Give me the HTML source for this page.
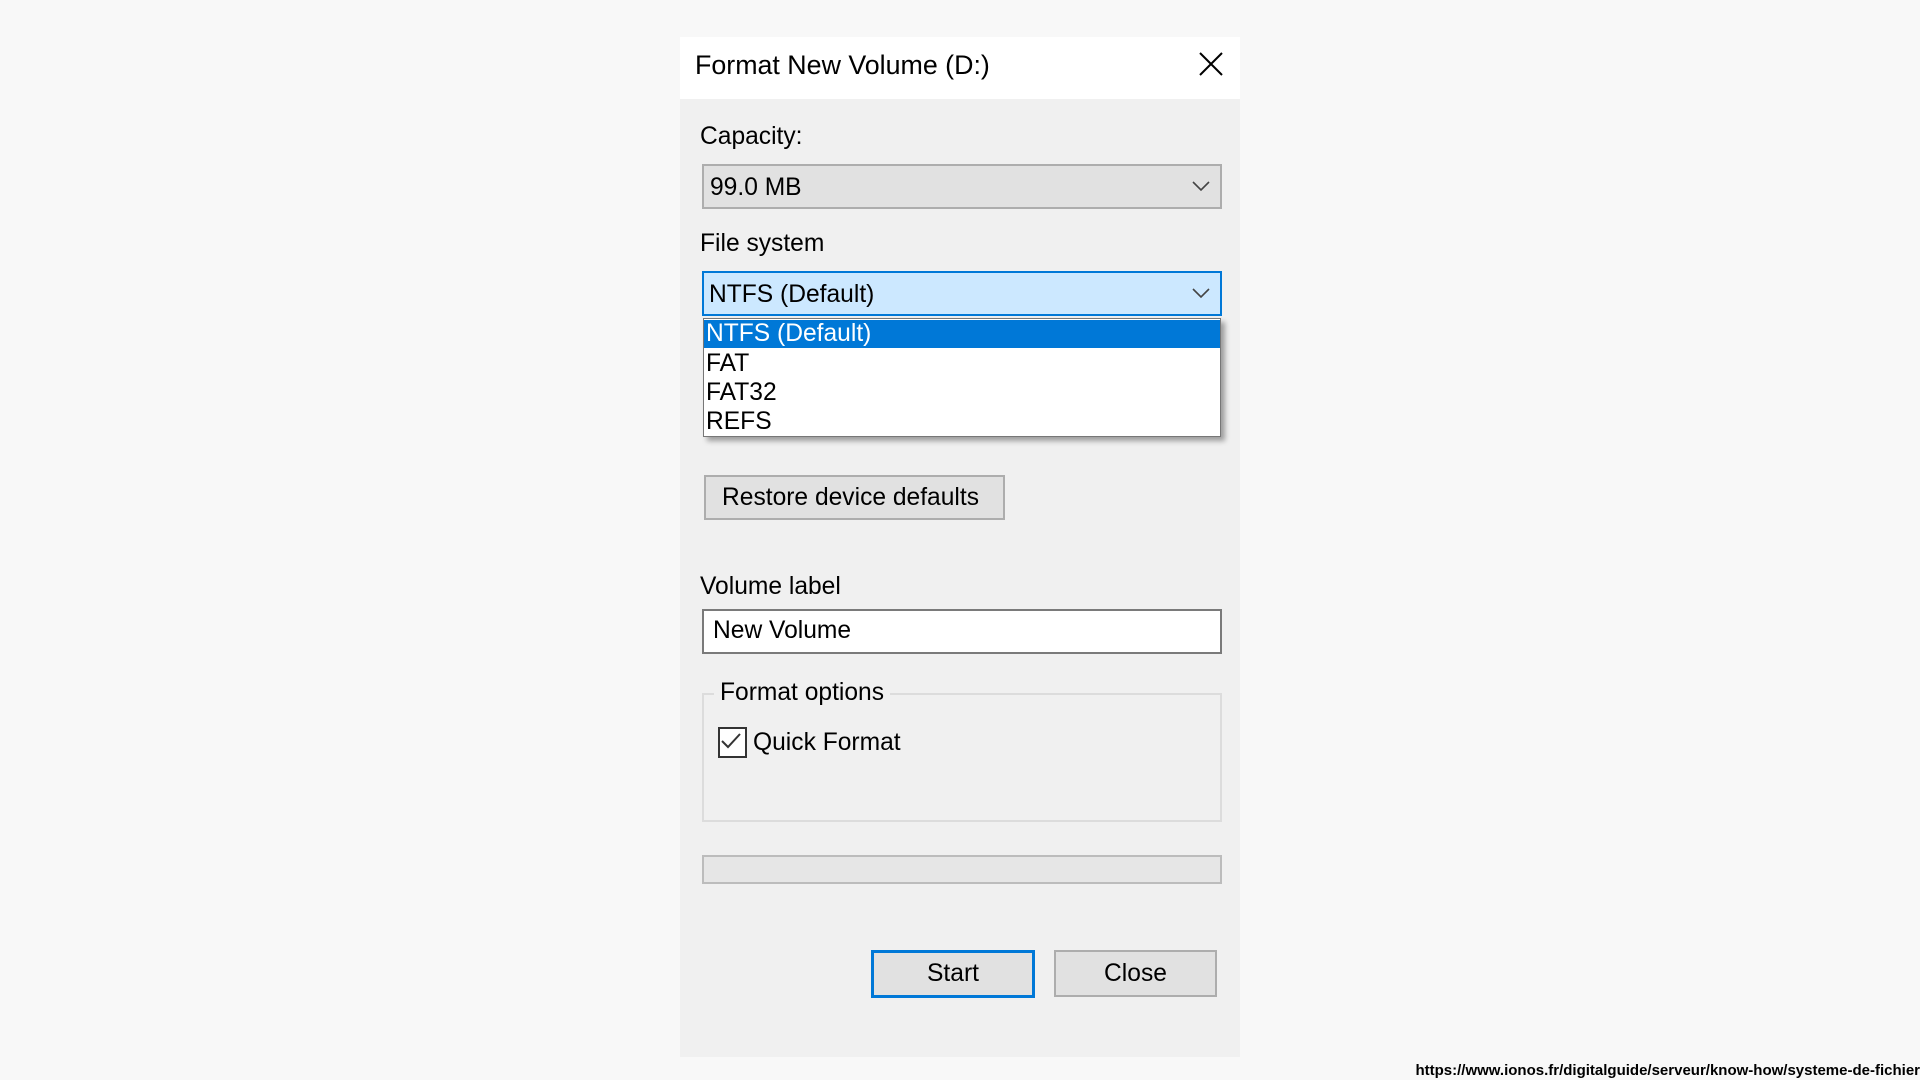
<!DOCTYPE html>
<html><head><meta charset="utf-8"><style>
body{margin:0;width:1920px;height:1080px;background:#f8f8f8;position:relative;overflow:hidden;font-family:"Liberation Sans",sans-serif;color:#000}
.a{position:absolute}
.t{font-size:24.6px;white-space:nowrap}
</style></head><body>
<div class="a" style="left:680px;top:37px;width:560px;height:1020px;background:#f0f0f0"></div>
<div class="a" style="left:680px;top:37px;width:560px;height:62px;background:#fff"></div>
<div class="a t" style="left:695px;top:50px;font-size:26.8px">Format New Volume (D:)</div>
<svg class="a" style="left:1199px;top:52px" width="24" height="24" viewBox="0 0 24 24"><path d="M1 1L23 23M23 1L1 23" stroke="#000" stroke-width="2"/></svg>

<div class="a t" style="left:700px;top:123px">Capacity:</div>
<div class="a" style="left:702px;top:164px;width:516px;height:41px;background:#e1e1e1;border:2px solid #adadad"></div>
<div class="a t" style="left:710px;top:174px">99.0 MB</div>
<svg class="a" style="left:1192px;top:180px" width="18" height="12" viewBox="0 0 18 12"><path d="M1 2L9 10L17 2" stroke="#444" stroke-width="1.6" fill="none"/></svg>

<div class="a t" style="left:700px;top:230px">File system</div>
<div class="a" style="left:702px;top:271px;width:516px;height:41px;background:#cce8ff;border:2px solid #0078d7"></div>
<div class="a t" style="left:709px;top:281px">NTFS (Default)</div>
<svg class="a" style="left:1192px;top:287px" width="18" height="12" viewBox="0 0 18 12"><path d="M1 2L9 10L17 2" stroke="#444" stroke-width="1.6" fill="none"/></svg>

<div class="a" style="left:703px;top:318px;width:516px;height:117px;background:#fff;border:1px solid #777;box-shadow:4px 4px 5px rgba(0,0,0,.35)"></div>
<div class="a" style="left:704px;top:320px;width:516px;height:28px;background:#0078d7"></div>
<div class="a t" style="left:706px;top:320px;color:#fff">NTFS (Default)</div>
<div class="a t" style="left:706px;top:350px">FAT</div>
<div class="a t" style="left:706px;top:379px">FAT32</div>
<div class="a t" style="left:706px;top:408px">REFS</div>

<div class="a" style="left:704px;top:475px;width:297px;height:41px;background:#e1e1e1;border:2px solid #adadad"></div>
<div class="a t" style="left:722px;top:484px">Restore device defaults</div>

<div class="a t" style="left:700px;top:573px">Volume label</div>
<div class="a" style="left:702px;top:609px;width:516px;height:41px;background:#fff;border:2px solid #7a7a7a"></div>
<div class="a t" style="left:713px;top:617px">New Volume</div>

<div class="a" style="left:702px;top:693px;width:516px;height:125px;border:2px solid #dcdcdc"></div>
<div class="a t" style="left:714px;top:679px;background:#f0f0f0;padding:0 6px">Format options</div>
<div class="a" style="left:718px;top:727px;width:25px;height:27px;border:2px solid #333;background:#fff"></div>
<svg class="a" style="left:720px;top:731px" width="22" height="20" viewBox="0 0 22 20"><path d="M2 10L8 16L20 3" stroke="#333" stroke-width="2" fill="none"/></svg>
<div class="a t" style="left:753px;top:729px">Quick Format</div>

<div class="a" style="left:702px;top:855px;width:516px;height:25px;background:#e6e6e6;border:2px solid #bcbcbc"></div>

<div class="a" style="left:871px;top:950px;width:158px;height:42px;background:#e1e1e1;border:3px solid #0078d7"></div>
<div class="a t" style="left:871px;top:960px;width:164px;text-align:center">Start</div>
<div class="a" style="left:1054px;top:950px;width:159px;height:43px;background:#e1e1e1;border:2px solid #adadad"></div>
<div class="a t" style="left:1054px;top:960px;width:163px;text-align:center">Close</div>

<div class="a" style="right:0;top:1062px;font-size:15px;font-weight:bold;white-space:nowrap">https://www.ionos.fr/digitalguide/serveur/know-how/systeme-de-fichier</div>
</body></html>
